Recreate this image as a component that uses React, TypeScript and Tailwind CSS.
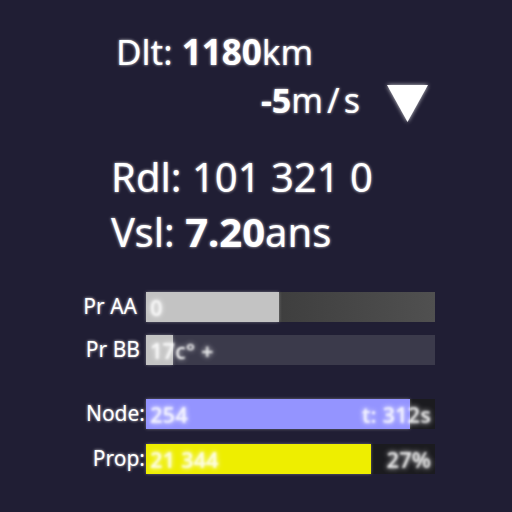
import React from "react"

const glow = "[text-shadow:0_0_3px_rgba(255,255,255,0.85)]"

function Bar({
  label,
  labelPad,
  pct,
  fill,
  track,
  left,
  right,
}: {
  label: string
  labelPad: string
  pct: number
  fill: string
  track: string
  left: React.ReactNode
  right?: React.ReactNode
}) {
  return (
    <div className="flex items-center h-[30px]">
      <div className={`w-[146px] ${labelPad} text-right text-[21px] text-white ${glow}`}>{label}</div>
      <div className={`relative w-[289px] h-full ${track}`}>
        <div className={`absolute left-0 top-0 bottom-0 ${fill} shadow-[0_0_3px_rgba(255,255,255,0.35)]`} style={{ width: `${pct}%` }} />
        <div className="relative flex h-full items-center justify-between px-[4px] text-[22px] font-semibold text-white/75 [text-shadow:0_0_5px_rgba(255,255,255,0.9)]">
          <span className="blur-[1px]">{left}</span>
          <span className="blur-[1px]">{right}</span>
        </div>
      </div>
    </div>
  )
}

export default function App() {
  return (
    <div className="w-[512px] h-[512px] bg-[#201e34] font-['Noto_Sans',sans-serif] text-white overflow-hidden">
      <div className="pt-[32px] pl-[116px]">
        <div className={`text-[35px] leading-[40px] ${glow}`}>
          Dlt: <span className="font-bold">1180</span>km
        </div>
      </div>
      <div className="flex items-center justify-end pr-[84px] mt-[5px]">
        <div className={`text-[34px] leading-[40px] ${glow}`}>
          <span className="font-bold">-5</span>
          <span className="tracking-[4px]">m/s</span>
        </div>
        <svg width="41" height="37" viewBox="0 0 41 37" className="ml-[23px] mt-[8px] drop-shadow-[0_0_2px_rgba(255,255,255,0.8)]">
          <polygon points="0,0 41,0 20.5,37" fill="#fff" />
        </svg>
      </div>
      <div className="pl-[111px] mt-[29px]">
        <div className={`text-[40px] leading-[52px] ${glow}`}>Rdl: 101 321 0</div>
        <div className={`text-[40px] leading-[52px] mt-[3px] ${glow}`}>
          Vsl: <span className="font-bold">7.20</span>ans
        </div>
      </div>
      <div className="mt-[34px] flex flex-col gap-[13px]">
        <Bar
          label="Pr AA"
          labelPad="pr-[9px]"
          pct={46}
          fill="bg-[#c3c3c3]"
          track="bg-gradient-to-r from-[#303030] to-[#505050]"
          left="0"
        />
        <Bar
          label="Pr BB"
          labelPad="pr-[6px]"
          pct={9.5}
          fill="bg-[#c3c3c3]"
          track="bg-[#3b3a4b]"
          left={
            <span>
              17<span className="font-normal text-white blur-0">c°</span> +
            </span>
          }
        />
      </div>
      <div className="mt-[34px] flex flex-col gap-[15px]">
        <Bar
          label="Node:"
          labelPad="pr-[1px]"
          pct={91.5}
          fill="bg-[#9494ff]"
          track="bg-[#1b1b1f]"
          left="254"
          right="t: 312s"
        />
        <Bar
          label="Prop:"
          labelPad="pr-[1px]"
          pct={78}
          fill="bg-[#eeee00]"
          track="bg-[#1b1b1f]"
          left="21 344"
          right="27%"
        />
      </div>
    </div>
  )
}
